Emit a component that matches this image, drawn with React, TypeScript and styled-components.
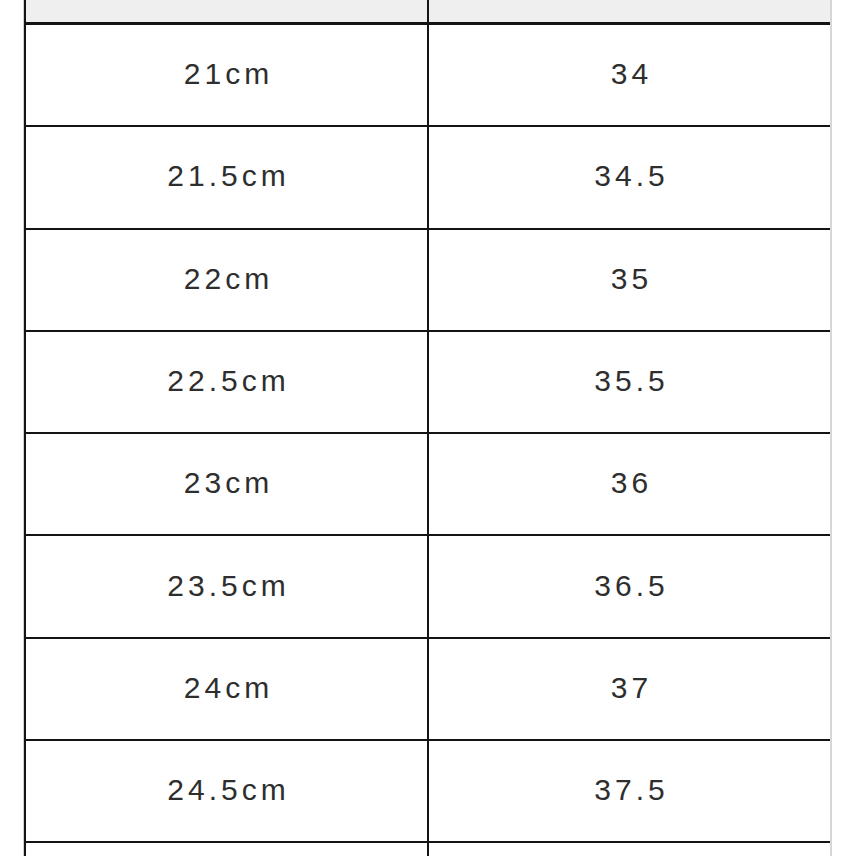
import { FC } from "react";
import styled, { createGlobalStyle } from "styled-components";

const GlobalStyle = createGlobalStyle`
  html, body {
    margin: 0;
    padding: 0;
    background: #ffffff;
    overflow: hidden;
  }
`;

const Page = styled.div`
  padding-left: 24px;
  font-family: "Liberation Sans", Arial, sans-serif;
`;

const SizeTable = styled.div`
  width: 804px;
  border-left: 2px solid #141414;
  border-right: 2px solid #d6d6d6;
  box-shadow: -1px 0 0 #d0d0d0;
`;

const Row = styled.div<{ $header?: boolean }>`
  display: grid;
  grid-template-columns: 401px 403px;
  height: ${(p) => (p.$header ? "22px" : "100.3px")};
  border-bottom: ${(p) => (p.$header ? "3px" : "2px")} solid #141414;
  background: ${(p) => (p.$header ? "#efefef" : "#ffffff")};
`;

const Cell = styled.div<{ $divider?: boolean }>`
  display: flex;
  align-items: center;
  justify-content: center;
  border-left: ${(p) => (p.$divider ? "2px solid #141414" : "none")};
  color: #2e2e2e;
  font-size: 30px;
  letter-spacing: 4px;
  padding-left: 4px;
  padding-bottom: 2px;
`;

const sizes: [string, string][] = [
  ["21cm", "34"],
  ["21.5cm", "34.5"],
  ["22cm", "35"],
  ["22.5cm", "35.5"],
  ["23cm", "36"],
  ["23.5cm", "36.5"],
  ["24cm", "37"],
  ["24.5cm", "37.5"],
];

const App: FC = () => {
  return (
    <>
      <GlobalStyle />
      <Page>
        <SizeTable>
          <Row $header>
            <Cell />
            <Cell $divider />
          </Row>
          {sizes.map(([jp, eu]) => (
            <Row key={jp}>
              <Cell>{jp}</Cell>
              <Cell $divider>{eu}</Cell>
            </Row>
          ))}
          {/* next row, cut off by the frame */}
          <Row>
            <Cell />
            <Cell $divider />
          </Row>
        </SizeTable>
      </Page>
    </>
  );
};

export default App;
